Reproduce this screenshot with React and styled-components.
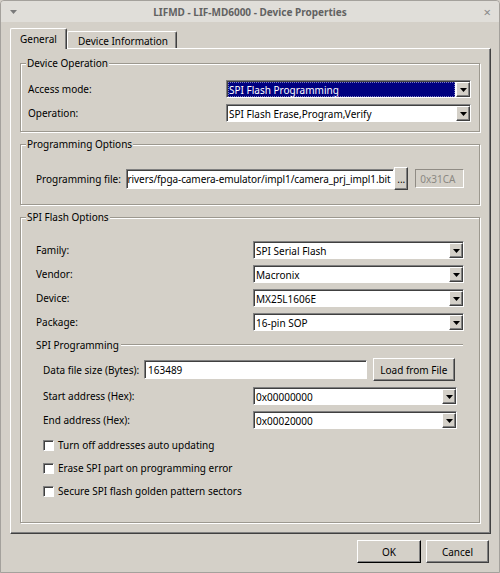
import React from 'react';
import styled, {createGlobalStyle, css} from 'styled-components';

const GlobalStyle = createGlobalStyle`
  html, body {
    margin: 0;
    padding: 0;
  }
  body {
    width: 500px;
    height: 573px;
    overflow: hidden;
    background: #d4d0c8;
    font-family: "Noto Sans", "DejaVu Sans", sans-serif;
    font-size: 10px;
    color: #000;
  }
`;

const raised = css`
  border-top: 1px solid #fff;
  border-left: 1px solid #fff;
  border-right: 1px solid #404040;
  border-bottom: 1px solid #404040;
  box-shadow: inset -1px -1px 0 #808080;
`;

const sunken = css`
  border-top: 1px solid #808080;
  border-left: 1px solid #808080;
  border-right: 1px solid #fff;
  border-bottom: 1px solid #fff;
  box-shadow: inset 1px 1px 0 #404040;
`;

const Window = styled.div`
  width: 500px;
  height: 573px;
  box-sizing: border-box;
  border: 1px solid #a4a19c;
  border-radius: 4px 4px 0 0;
  display: flex;
  flex-direction: column;
  background: #d4d0c8;
`;

const TitleBar = styled.div`
  height: 21px;
  display: flex;
  align-items: center;
  background: #e0ded9;
  border-radius: 3px 3px 0 0;
  color: #626262;
  font-weight: 700;
`;

const TitleSide = styled.div`
  width: 30px;
  display: flex;
  align-items: center;
  justify-content: ${p => p.$right ? 'flex-end' : 'flex-start'};
  padding: ${p => p.$right ? '0 8px 0 0' : '0 0 0 9px'};
  box-sizing: border-box;
  color: #8a8a8a;
  font-size: 13px;
  font-weight: 400;
`;

const TitleText = styled.div`
  flex: 1;
  text-align: center;
`;

const Body = styled.div`
  padding: 6px 9px 0 9px;
  display: flex;
  flex-direction: column;
`;

const TabBar = styled.div`
  display: flex;
  align-items: flex-end;
  height: 20px;
  position: relative;
  z-index: 1;
`;

const Tab = styled.div`
  box-sizing: border-box;
  height: ${p => p.$active ? '21px' : '17px'};
  width: ${p => p.$width}px;
  padding-left: ${p => p.$active ? 9 : 10}px;
  display: flex;
  align-items: center;
  background: #d4d0c8;
  border-top: 1px solid #fff;
  border-left: 1px solid #fff;
  border-right: 1px solid #404040;
  box-shadow: inset -1px 0 0 #808080;
  border-radius: 2px 2px 0 0;
  margin-bottom: ${p => p.$active ? '-1px' : '0'};
  padding-top: ${p => p.$active ? '0' : '1px'};
`;

const TabPane = styled.div`
  width: 481px;
  height: 486px;
  box-sizing: border-box;
  ${raised};
  padding: 14px 0 0 9px;
`;

const Group = styled.div`
  position: relative;
  width: 460px;
  box-sizing: border-box;
  border: 1px solid #9c988f;
  box-shadow: inset 1px 1px 0 #fff, 1px 1px 0 #fff;
  margin-bottom: 12px;
  padding: ${p => p.$pad};
`;

const GroupTitle = styled.div`
  position: absolute;
  top: -8px;
  left: 5px;
  padding: 0 1px;
  background: #d4d0c8;
  line-height: 14px;
`;

const FormGrid = styled.div`
  display: grid;
  grid-template-columns: ${p => p.$cols};
  row-gap: 6px;
  align-items: center;
  margin-top: ${p => p.$top || 0}px;
`;

const Label = styled.div`
  line-height: 18px;
  white-space: nowrap;
  width: ${p => p.$width ? `${p.$width}px` : 'auto'};
`;

const ComboBox = styled.div`
  box-sizing: border-box;
  height: 18px;
  display: flex;
  align-items: stretch;
  background: #fff;
  ${sunken};
  padding: 1px 0 0 1px;
`;

const ComboText = styled.div`
  flex: 1;
  display: flex;
  align-items: center;
  padding-left: 1px;
  white-space: nowrap;
  overflow: hidden;
  background: ${p => p.$selected ? '#000080' : '#fff'};
  color: ${p => p.$selected ? '#fff' : '#000'};
  outline: ${p => p.$selected ? '1px dotted #8080c0' : 'none'};
  outline-offset: -1px;
  margin-right: 1px;
`;

const ArrowButton = styled.div`
  width: 14px;
  box-sizing: border-box;
  background: #d4d0c8;
  ${raised};
  display: flex;
  align-items: center;
  justify-content: center;
`;

const Row = styled.div`
  display: flex;
  align-items: center;
  gap: ${p => p.$gap || 0}px;
`;

const TextInput = styled.div`
  box-sizing: border-box;
  height: ${p => p.$height || 20}px;
  width: ${p => p.$width}px;
  display: flex;
  align-items: center;
  padding-left: ${p => p.$tight ? 1 : 3}px;
  letter-spacing: ${p => p.$tight ? '-0.09px' : 'normal'};
  background: #fff;
  ${sunken};
  white-space: nowrap;
  overflow: hidden;
`;

const DisabledInput = styled.div`
  box-sizing: border-box;
  height: 19px;
  width: 49px;
  display: flex;
  align-items: center;
  padding-left: 4px;
  color: #8b8882;
  border-top: 1px solid #908c85;
  border-left: 1px solid #908c85;
  border-right: 1px solid #fff;
  border-bottom: 1px solid #fff;
`;

const PushButton = styled.div`
  box-sizing: border-box;
  width: ${p => p.$width}px;
  height: ${p => p.$height || 23}px;
  display: flex;
  align-items: center;
  justify-content: center;
  background: #d4d0c8;
  ${raised};
  ${p => p.$default && css`
    border-right-color: #000;
    border-bottom-color: #000;
  `}
`;

const Spacer = styled.div`
  width: ${p => p.$width}px;
`;

const SubHeader = styled.div`
  display: flex;
  align-items: center;
  gap: 2px;
  margin: 7px 0 6px 0;
  line-height: 14px;
`;

const SubLine = styled.div`
  flex: 1;
  height: 0;
  border-top: 1px solid #9c988f;
  border-bottom: 1px solid #fff;
`;

const SubSection = styled.div`
  padding: 0 8px 0 7px;
`;

const CheckList = styled.div`
  display: flex;
  flex-direction: column;
  gap: 9px;
  margin-top: 9px;
`;

const CheckRow = styled.label`
  display: flex;
  align-items: center;
  gap: 4px;
  line-height: 14px;
`;

const CheckBox = styled.span`
  width: 11px;
  height: 11px;
  box-sizing: border-box;
  background: #fff;
  ${sunken};
`;

const Footer = styled.div`
  display: flex;
  justify-content: flex-end;
  gap: 5px;
  margin-top: 6px;
  padding-right: 1px;
`;

const Arrow = () => (
  <svg width="7" height="4" viewBox="0 0 7 4">
    <path d="M0 0h7L3.5 4z" fill="#000" />
  </svg>
);

const Combo = ({value, selected}) => (
  <ComboBox>
    <ComboText $selected={selected}>{value}</ComboText>
    <ArrowButton><Arrow /></ArrowButton>
  </ComboBox>
);

export default function App() {
  return (
    <>
      <GlobalStyle />
      <Window>
        <TitleBar>
          <TitleSide>
            <svg width="7" height="4" viewBox="0 0 7 4">
              <path d="M0 0h7L3.5 4z" fill="#7a7a7a" />
            </svg>
          </TitleSide>
          <TitleText>LIFMD - LIF-MD6000 - Device Properties</TitleText>
          <TitleSide $right>×</TitleSide>
        </TitleBar>
        <Body>
          <TabBar>
            <Tab $active $width={57}>General</Tab>
            <Tab $width={110}>Device Information</Tab>
          </TabBar>
          <TabPane>
            <Group $pad="16px 9px 9px 7px">
              <GroupTitle>Device Operation</GroupTitle>
              <FormGrid $cols="198px 245px">
                <Label>Access mode:</Label>
                <Combo value="SPI Flash Programming" selected />
                <Label>Operation:</Label>
                <Combo value="SPI Flash Erase,Program,Verify" />
              </FormGrid>
            </Group>

            <Group $pad="22px 15px 14px 15px">
              <GroupTitle>Programming Options</GroupTitle>
              <Row>
                <Label $width={90}>Programming file:</Label>
                <TextInput $width={270} $tight>rivers/fpga-camera-emulator/impl1/camera_prj_impl1.bit</TextInput>
                <PushButton $width={14}>...</PushButton>
                <Spacer $width={7} />
                <DisabledInput>0x31CA</DisabledInput>
              </Row>
            </Group>

            <Group $pad="23px 16px 24px 15px">
              <GroupTitle>SPI Flash Options</GroupTitle>
              <FormGrid $cols="217px 211px">
                <Label>Family:</Label>
                <Combo value="SPI Serial Flash" />
                <Label>Vendor:</Label>
                <Combo value="Macronix" />
                <Label>Device:</Label>
                <Combo value="MX25L1606E" />
                <Label>Package:</Label>
                <Combo value="16-pin SOP" />
              </FormGrid>

              <SubHeader>
                <span>SPI Programming</span>
                <SubLine />
              </SubHeader>

              <SubSection>
                <Row $gap={6}>
                  <Label $width={95}>Data file size (Bytes):</Label>
                  <TextInput $width={224} $height={19}>163489</TextInput>
                  <PushButton $width={83}>Load from File</PushButton>
                </Row>
                <FormGrid $cols="210px 204px" $top={6}>
                  <Label>Start address (Hex):</Label>
                  <Combo value="0x00000000" />
                  <Label>End address (Hex):</Label>
                  <Combo value="0x00020000" />
                </FormGrid>
                <CheckList>
                  <CheckRow><CheckBox />Turn off addresses auto updating</CheckRow>
                  <CheckRow><CheckBox />Erase SPI part on programming error</CheckRow>
                  <CheckRow><CheckBox />Secure SPI flash golden pattern sectors</CheckRow>
                </CheckList>
              </SubSection>
            </Group>
          </TabPane>
          <Footer>
            <PushButton $width={64} $default>OK</PushButton>
            <PushButton $width={63}>Cancel</PushButton>
          </Footer>
        </Body>
      </Window>
    </>
  );
}
